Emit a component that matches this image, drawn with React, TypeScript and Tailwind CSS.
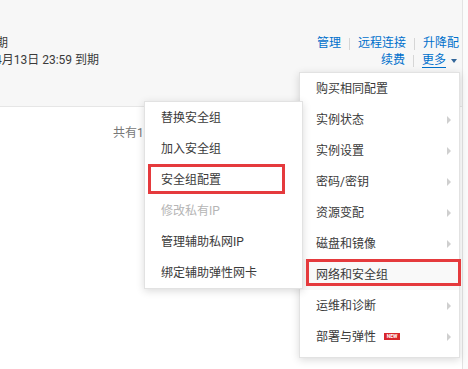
const mainItems = [
  { label: "购买相同配置", arrow: false },
  { label: "实例状态", arrow: true },
  { label: "实例设置", arrow: true },
  { label: "密码/密钥", arrow: true },
  { label: "资源变配", arrow: true },
  { label: "磁盘和镜像", arrow: true },
  { label: "网络和安全组", arrow: false, active: true },
  { label: "运维和诊断", arrow: true },
  { label: "部署与弹性", arrow: true, badge: true },
];

const subItems = [
  { label: "替换安全组" },
  { label: "加入安全组" },
  { label: "安全组配置" },
  { label: "修改私有IP", disabled: true },
  { label: "管理辅助私网IP" },
  { label: "绑定辅助弹性网卡" },
];

const Sep = () => <span className="inline-block w-px h-[12px] bg-[#d6d6d6] mx-[8px]"></span>;

const Arrow = () => (
  <span className="w-0 h-0 border-y-[4px] border-y-transparent border-l-[4px] border-l-[#cfcfcf]"></span>
);

export default function App() {
  return (
    <div className="relative w-[468px] h-[369px] overflow-hidden bg-[#fbfbfb] text-[12px] text-[#3a3a3a] font-['Roboto','Noto_Sans_CJK_SC',sans-serif]">
      <div className="flex h-full">
        <div className="w-[463px] h-full flex flex-col border-r border-[#e3e3e3] bg-white">
          <div className="h-[107px] shrink-0 bg-[#f7f7f7] border-b border-[#e6e6e6] pt-[35px] flex justify-between leading-[17px]">
            <div className="flex flex-col">
              <span className="ml-[-4px]">期</span>
              <span className="ml-[-5px]">4月13日 23:59 到期</span>
            </div>
            <div className="flex flex-col items-end pr-[3px] text-[#0070cc]">
              <div className="flex items-center">
                <span>管理</span>
                <Sep />
                <span>远程连接</span>
                <Sep />
                <span>升降配</span>
              </div>
              <div className="flex items-center pr-[2px]">
                <span>续费</span>
                <Sep />
                <span className="underline underline-offset-[3px] mr-[5px]">更多</span>
                <span className="w-0 h-0 border-x-[3px] border-x-transparent border-t-[4px] border-t-[#336699]"></span>
              </div>
            </div>
          </div>
          <div className="pl-[113px] pt-[18px] text-[#777] leading-[17px]">共有1条</div>
        </div>
      </div>

      <div className="absolute left-[425px] top-[-190px] w-[200px] h-[200px] rounded-full bg-white border border-[#dcdcdc] shadow-[0_1px_4px_rgba(0,0,0,0.12)]"></div>

      <div className="absolute left-[299px] top-[72px] w-[161px] bg-white border border-[#e2e2e2] shadow-[0_2px_8px_rgba(0,0,0,0.15)] pt-0 pb-[5px]">
        {mainItems.map((item) => (
          <div
            key={item.label}
            className={`h-[31px] flex items-center justify-between pl-[16px] pr-[8px] ${item.active ? "bg-[#f9f9f9]" : ""}`}
          >
            <span className="flex items-center">
              {item.label}
              {item.badge && (
                <span className="ml-[8px] w-[16px] h-[7px] bg-[#d9262c] text-white text-[5px] font-bold leading-[7px] flex items-center justify-center">
                  NEW
                </span>
              )}
            </span>
            {item.arrow && <Arrow />}
          </div>
        ))}
      </div>

      <div className="absolute left-[144px] top-[101px] w-[159px] bg-white border border-[#e2e2e2] shadow-[0_2px_8px_rgba(0,0,0,0.15)] pt-0 pb-0">
        {subItems.map((item) => (
          <div
            key={item.label}
            className={`h-[31px] flex items-center pl-[16px] ${item.disabled ? "text-[#b5b5b5]" : ""}`}
          >
            {item.label}
          </div>
        ))}
      </div>

      <div className="absolute left-[148px] top-[164px] w-[137px] h-[30px] border-[3px] border-[#e53a3d]"></div>
      <div className="absolute left-[306px] top-[259px] w-[155px] h-[27px] border-[3px] border-[#e53a3d]"></div>
    </div>
  );
}
